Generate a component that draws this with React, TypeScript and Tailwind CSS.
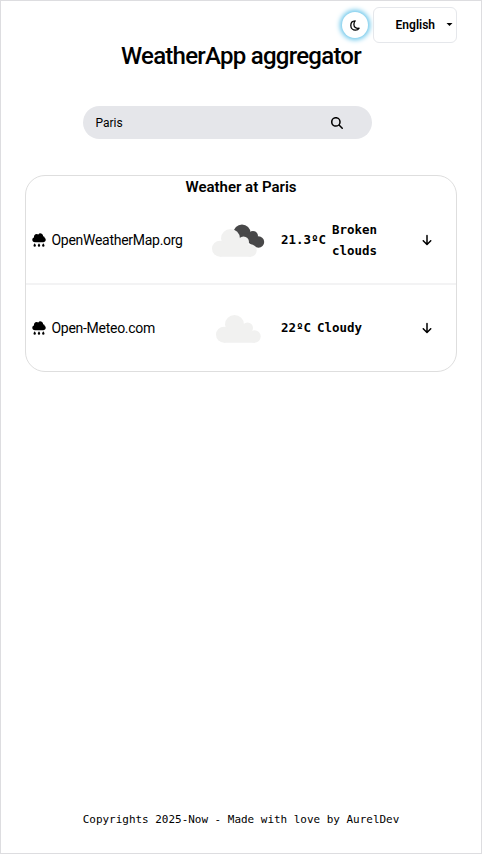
import React from "react";
import { FaArrowDown, FaMagnifyingGlass } from "react-icons/fa6";

function RainIcon() {
  return (
    <svg width="14" height="14" viewBox="0 0 14 14" fill="currentColor">
      <path d="M3 9.2C1.3 9.2.3 8.2.3 6.8C.3 5.6 1 4.8 2 4.5C1.7 2.3 3 .9 4.6.9C5.4.9 5.9 1.2 6.3 1.6C6.9.6 7.8.2 8.8.4C10.3.6 11.2 1.8 11.1 3.3C12.2 3.4 12.8 4.2 12.7 5.1C13.4 5.5 13.8 6.1 13.7 7C13.6 8.4 12.6 9.2 11.2 9.2Z" />
      <path d="M2.7 10.2C3.3 11.2 3.9 11.9 3.9 12.5A1.2 1.2 0 0 1 1.5 12.5C1.5 11.9 2.1 11.2 2.7 10.2ZM7 10.2C7.6 11.2 8.2 11.9 8.2 12.5A1.2 1.2 0 0 1 5.8 12.5C5.8 11.9 6.4 11.2 7 10.2ZM11.3 10.2C11.9 11.2 12.5 11.9 12.5 12.5A1.2 1.2 0 0 1 10.1 12.5C10.1 11.9 10.7 11.2 11.3 10.2Z" />
    </svg>
  );
}

function MoonIcon() {
  return (
    <svg width="10" height="11" viewBox="0 0 10 11" fill="none" stroke="currentColor" strokeWidth="1.3" strokeLinejoin="round">
      <path d="M5.2 .9C2.3 1 .8 3.1 .8 5.4C.8 8.1 2.9 10.1 5.4 10.1C7.2 10.1 8.5 9.3 9.1 8.2C6 8.8 3.9 7 3.9 4.5C3.9 2.8 4.4 1.7 5.2 .9Z" />
    </svg>
  );
}

function SingleCloud() {
  return (
    <svg width="45" height="28" viewBox="0 0 45 28" fill="#f1f1f0">
      <circle cx="8" cy="19.7" r="8" />
      <circle cx="18.5" cy="9.5" r="9.5" />
      <circle cx="31.5" cy="13" r="5.5" />
      <circle cx="38.5" cy="21.5" r="6.2" />
      <path d="M8 15L18 12H31L39 20V27.7H8Z" />
    </svg>
  );
}

function BrokenClouds() {
  return (
    <svg width="53" height="34" viewBox="0 0 53 34">
      <g fill="#484849">
        <circle cx="30" cy="9" r="8.6" />
        <circle cx="41" cy="12" r="5" />
        <circle cx="46.5" cy="18" r="5.7" />
        <path d="M26 10L40 9L48 18L42 23Z" />
      </g>
      <g transform="translate(0 5)" fill="#f1f1f0">
        <circle cx="8" cy="19.7" r="8" />
        <circle cx="18.5" cy="9.5" r="9.5" />
        <circle cx="31.5" cy="13" r="5.5" />
        <circle cx="38.5" cy="21.5" r="6.2" />
        <path d="M8 15L18 12H31L39 20V27.7H8Z" />
      </g>
    </svg>
  );
}

type RowProps = { source: string; temperature: string; label: string; cloud: React.ReactNode };

function WeatherRow({ source, temperature, label, cloud }: RowProps) {
  return (
    <div className="flex h-[87px] items-center pl-[5.5px]">
      <div className="flex w-[174px] items-center gap-1.5 text-sm tracking-[-0.28px]">
        <RainIcon />
        <span>{source}</span>
      </div>
      <div className="flex w-[65px] justify-center pt-0.5">{cloud}</div>
      <div className="ml-[10.5px] flex w-[130px] items-center gap-1.5 font-['DejaVu_Sans_Mono',monospace] text-[12.46px] leading-[21px] font-bold">
        <span>{temperature}</span>
        <span className="w-[60px]">{label}</span>
      </div>
      <FaArrowDown size={12} className="ml-[9.5px]" />
    </div>
  );
}

export default function App() {
  return (
    <div className="flex h-[854px] w-[482px] flex-col border border-[#dddde0] bg-white px-6 font-[Roboto,sans-serif] text-black">
      <header className="flex h-[41px] items-start justify-end gap-[5px] pt-1.5">
        <button className="mt-[5px] flex size-[26px] items-center justify-center rounded-full bg-white shadow-[0_0_5px_2px_#68c5ea]">
          <MoonIcon />
        </button>
        <button className="flex h-9 w-[84px] items-center justify-end rounded-md border border-gray-200 pr-[3px] text-xs font-semibold">
          <span>English</span>
          <svg className="ml-[11px]" width="7" height="4" viewBox="0 0 7 4"><path d="M0.5 0H6.5L3.5 3Z" /></svg>
        </button>
      </header>
      <h1 className="h-16 text-center text-2xl leading-7 font-medium tracking-[-0.74px]">WeatherApp aggregator</h1>
      <div className="ml-[58px] flex h-[33px] w-[289px] items-center justify-between rounded-full bg-[#e5e6ea] pr-[29px] pl-[12.5px] text-xs">
        <span>Paris</span>
        <FaMagnifyingGlass size={12} />
      </div>
      <main className="mt-9 h-[197px] rounded-[20px] border border-[#dedede]">
        <h2 className="h-5 text-center text-[15px] leading-[22px] font-semibold">Weather at Paris</h2>
        <WeatherRow source="OpenWeatherMap.org" temperature="21.3ºC" label="Broken clouds" cloud={<BrokenClouds />} />
        <div className="-mb-px h-0.5 bg-[#f3f3f4]" />
        <WeatherRow source="Open-Meteo.com" temperature="22ºC" label="Cloudy" cloud={<SingleCloud />} />
      </main>
      <footer className="mt-auto pb-6 text-center font-['DejaVu_Sans_Mono',monospace] text-[10.96px] leading-[18px]">
        Copyrights 2025-Now - Made with love by AurelDev
      </footer>
    </div>
  );
}
